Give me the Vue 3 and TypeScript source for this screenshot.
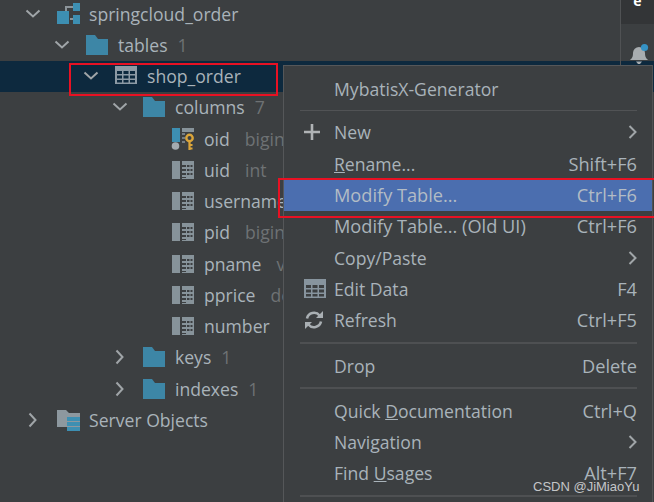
<script setup lang="ts">
interface TreeRow {
  depth: number
  arrow: 'down' | 'right' | ''
  icon: 'schema' | 'folder' | 'table' | 'key' | 'column' | 'server'
  name: string
  extra?: string
  kind?: 'count' | 'type'
  selected?: boolean
}
interface MenuRow {
  sep?: 'thin' | 'thick'
  before?: string
  mnemonic?: string
  after?: string
  shortcut?: string
  sub?: boolean
  icon?: 'plus' | 'grid' | 'refresh'
  active?: boolean
  wide?: boolean
}
const rows: TreeRow[] = [
  { depth: 0, arrow: 'down', icon: 'schema', name: 'springcloud_order' },
  { depth: 1, arrow: 'down', icon: 'folder', name: 'tables', extra: '1', kind: 'count' },
  { depth: 2, arrow: 'down', icon: 'table', name: 'shop_order', selected: true },
  { depth: 3, arrow: 'down', icon: 'folder', name: 'columns', extra: '7', kind: 'count' },
  { depth: 4, arrow: '', icon: 'key', name: 'oid', extra: 'bigint', kind: 'type' },
  { depth: 4, arrow: '', icon: 'column', name: 'uid', extra: 'int', kind: 'type' },
  { depth: 4, arrow: '', icon: 'column', name: 'username', extra: 'varchar', kind: 'type' },
  { depth: 4, arrow: '', icon: 'column', name: 'pid', extra: 'bigint', kind: 'type' },
  { depth: 4, arrow: '', icon: 'column', name: 'pname', extra: 'varchar', kind: 'type' },
  { depth: 4, arrow: '', icon: 'column', name: 'pprice', extra: 'decimal', kind: 'type' },
  { depth: 4, arrow: '', icon: 'column', name: 'number', extra: 'int', kind: 'type' },
  { depth: 3, arrow: 'right', icon: 'folder', name: 'keys', extra: '1', kind: 'count' },
  { depth: 3, arrow: 'right', icon: 'folder', name: 'indexes', extra: '1', kind: 'count' },
  { depth: 0, arrow: 'right', icon: 'server', name: 'Server Objects' },
]
const menu: MenuRow[] = [
  { before: 'MybatisX-Generator' },
  { sep: 'thin' },
  { before: 'New', sub: true, icon: 'plus' },
  { mnemonic: 'R', after: 'ename...', shortcut: 'Shift+F6' },
  { before: 'Modify Table...', shortcut: 'Ctrl+F6', active: true, wide: true },
  { before: 'Modify Table... (Old UI)', shortcut: 'Ctrl+F6', wide: true },
  { before: 'Copy/Paste', sub: true },
  { before: 'Edit Data', shortcut: 'F4', icon: 'grid' },
  { before: 'Refresh', shortcut: 'Ctrl+F5', icon: 'refresh' },
  { sep: 'thick' },
  { before: 'Drop', shortcut: 'Delete' },
  { sep: 'thick' },
  { before: 'Quick ', mnemonic: 'D', after: 'ocumentation', shortcut: 'Ctrl+Q' },
  { before: 'Navigation', sub: true },
  { before: 'Find ', mnemonic: 'U', after: 'sages', shortcut: 'Alt+F7' },
  { sep: 'thick' },
]
</script>

<template>
  <div class="page">
    <div class="tree">
      <div v-for="r in rows" :key="r.name" class="row" :class="[`depth-${r.depth}`, { selected: r.selected }]">
        <span class="arrow">
          <svg v-if="r.arrow === 'down'" width="16" height="16" viewBox="0 0 16 16"><path d="M1.5 4.5 8 10.5 14.5 4.5" class="chev" /></svg>
          <svg v-else-if="r.arrow === 'right'" width="16" height="16" viewBox="0 0 16 16"><path d="M4.5 1.5 10.5 8 4.5 14.5" class="chev" /></svg>
        </span>
        <span class="icon">
          <svg v-if="r.icon === 'schema'" width="24" height="24" viewBox="0 0 24 24">
            <path d="M10 14V5h8M14 17h6" fill="none" stroke="#8c9499" stroke-width="2" />
            <rect x="17" y="1" width="8" height="8" fill="#3d8fb2" />
            <rect x="1" y="9" width="12" height="13" fill="#3d8fb2" />
            <rect x="17" y="13" width="8" height="9" fill="#3d8fb2" />
          </svg>
          <svg v-else-if="r.icon === 'folder'" width="24" height="24" viewBox="0 0 24 24">
            <path d="M1 2h9l3 4h10v16H1z" fill="#3d86a6" />
          </svg>
          <svg v-else-if="r.icon === 'table'" width="24" height="24" viewBox="0 0 24 24">
            <rect x="1" y="2" width="22" height="18" fill="#8c9aa5" />
            <g fill="#0d293e">
              <rect x="3" y="7" width="5" height="3" /><rect x="9.5" y="7" width="5" height="3" /><rect x="16" y="7" width="5" height="3" />
              <rect x="3" y="11.5" width="5" height="3" /><rect x="9.5" y="11.5" width="5" height="3" /><rect x="16" y="11.5" width="5" height="3" />
              <rect x="3" y="16" width="5" height="2.5" /><rect x="9.5" y="16" width="5" height="2.5" /><rect x="16" y="16" width="5" height="2.5" />
            </g>
          </svg>
          <svg v-else-if="r.icon === 'column'" width="24" height="24" viewBox="0 0 24 24">
            <rect x="1" y="3" width="8" height="18" fill="#87939a" />
            <path d="M11 3h12v18H11z" fill="#87939a" />
            <g fill="#3c3f41">
              <rect x="11" y="7" width="4" height="2" /><rect x="16" y="7" width="2.5" height="2" /><rect x="19.5" y="7" width="2" height="2" />
              <rect x="11" y="11" width="4" height="2" /><rect x="16" y="11" width="2.5" height="2" /><rect x="19.5" y="11" width="2" height="2" />
              <rect x="11" y="15" width="4" height="2" /><rect x="16" y="15" width="2.5" height="2" /><rect x="19.5" y="15" width="2" height="2" />
              <rect x="11" y="19" width="4" height="1" />
            </g>
          </svg>
          <svg v-else-if="r.icon === 'key'" width="24" height="24" viewBox="0 0 24 24">
            <rect x="1" y="1" width="8" height="14" fill="#3d8fb2" />
            <circle cx="4.5" cy="19" r="3.8" fill="#a3abb0" />
            <path d="M11 1h12v4H11z" fill="#87939a" />
            <path d="M11 7h3M11 11h3M11 15h3" stroke="#87939a" stroke-width="1.5" />
            <circle cx="18.5" cy="11" r="3.2" fill="none" stroke="#dba53a" stroke-width="2.4" />
            <path d="M18.5 14v9M18.5 18h3M18.5 21.5h3" stroke="#dba53a" stroke-width="2.2" fill="none" />
          </svg>
          <svg v-else width="24" height="24" viewBox="0 0 24 24">
            <path d="M1 2h9l3 3h11v14H1z" fill="#8d989f" />
            <rect x="11" y="9" width="13" height="4" fill="#3d8fb2" />
            <rect x="11" y="14" width="13" height="4" fill="#3d8fb2" />
            <rect x="11" y="19" width="13" height="4" fill="#3d8fb2" />
          </svg>
        </span>
        <span class="name">{{ r.name }}</span>
        <span v-if="r.extra" :class="r.kind">{{ r.extra }}</span>
      </div>
    </div>

    <aside class="side">
      <div class="side-top"><span class="side-glyph">e</span></div>
      <svg class="bell" width="22" height="22" viewBox="0 0 22 22">
        <path d="M2 17c2-2 3-3 3-7a6 6 0 0 1 12 0c0 4 1 5 3 7z" fill="#a8adb0" />
        <path d="M8 18.5h6l-2 2.5h-2z" fill="#a8adb0" />
        <circle cx="16.5" cy="4.5" r="3.6" fill="#3592c4" />
      </svg>
    </aside>

    <div class="menu">
      <template v-for="(m, i) in menu" :key="i">
        <div v-if="m.sep" class="sep" :class="m.sep"></div>
        <div v-else class="item" :class="{ active: m.active, wide: m.wide }">
          <span class="m-icon">
            <svg v-if="m.icon === 'plus'" width="16" height="16" viewBox="0 0 16 16"><path d="M0 8h16M8 0v16" stroke="#b0b3b5" stroke-width="2.6" /></svg>
            <svg v-else-if="m.icon === 'grid'" width="22" height="20" viewBox="0 0 22 20">
              <rect width="22" height="19" fill="#87949e" />
              <g fill="#3c3f41">
                <rect x="2" y="6" width="5" height="3" /><rect x="8.5" y="6" width="5" height="3" /><rect x="15" y="6" width="5" height="3" />
                <rect x="2" y="10.5" width="5" height="3" /><rect x="8.5" y="10.5" width="5" height="3" /><rect x="15" y="10.5" width="5" height="3" />
                <rect x="2" y="15" width="5" height="2.5" /><rect x="8.5" y="15" width="5" height="2.5" /><rect x="15" y="15" width="5" height="2.5" />
              </g>
            </svg>
            <svg v-else-if="m.icon === 'refresh'" width="20" height="20" viewBox="0 0 20 20">
              <path d="M3 8.5A7.2 7.2 0 0 1 15.6 5.5" fill="none" stroke="#a9afb3" stroke-width="2.6" />
              <path d="M12 8h7V1z" fill="#a9afb3" />
              <path d="M17 11.5A7.2 7.2 0 0 1 4.4 14.5" fill="none" stroke="#a9afb3" stroke-width="2.6" />
              <path d="M8 12H1v7z" fill="#a9afb3" />
            </svg>
          </span>
          <span class="label">{{ m.before }}<u v-if="m.mnemonic">{{ m.mnemonic }}</u>{{ m.after }}</span>
          <span v-if="m.shortcut" class="shortcut">{{ m.shortcut }}</span>
          <svg v-if="m.sub" class="sub" width="12" height="16" viewBox="0 0 12 16"><path d="M2.5 2 8.5 8l-6 6" class="chev" /></svg>
        </div>
      </template>
    </div>

    <div class="mark mark-row"></div>
    <div class="mark mark-item"></div>
    <div class="watermark">CSDN @JiMiaoYu</div>
  </div>
</template>

<style scoped>
.page {
  position: relative;
  width: 654px;
  height: 502px;
  overflow: hidden;
  background: #3c3f41;
  color: #a9b3ba;
  font-family: "Open Sans", "Liberation Sans", sans-serif;
  font-size: 17.6px;
}
.tree {
  margin-top: -2px;
}
.row {
  display: flex;
  align-items: center;
  height: 31.25px;
  white-space: nowrap;
}
.selected { background: #0d293e; }
.depth-0 { padding-left: 25px; }
.depth-1 { padding-left: 54px; }
.depth-2 { padding-left: 83px; }
.depth-3 { padding-left: 111px; }
.depth-4 { padding-left: 140px; }
.arrow {
  width: 31px;
  height: 16px;
  flex: none;
}
.arrow svg { display: block; }
.depth-3 .arrow svg { margin-left: 1px; }
.chev {
  fill: none;
  stroke: #a0a5a8;
  stroke-width: 2;
}
.icon {
  width: 33px;
  height: 24px;
  flex: none;
}
.icon svg { display: block; }
.count { margin-left: 10px; color: #6e7274; }
.type { margin-left: 15px; color: #6e7274; }

.side {
  position: absolute;
  top: 0;
  right: 0;
  width: 33px;
  height: 65px;
  border-left: 1px solid #505254;
}
.side-top {
  height: 24px;
  background: #333537;
  text-align: center;
  overflow: hidden;
}
.side-glyph {
  display: block;
  margin-top: -9px;
  color: #fff;
  font-size: 14px;
  font-weight: 700;
  line-height: 20px;
}
.bell {
  position: absolute;
  left: 7px;
  top: 43px;
}

.menu {
  position: absolute;
  left: 283px;
  top: 65px;
  width: 370px;
  height: 460px;
  box-sizing: border-box;
  padding-top: 7px;
  background: #3c3f41;
  border: 1px solid #555759;
  border-right-color: #505254;
}
.item {
  display: flex;
  align-items: center;
  height: 31.3px;
  padding-right: 15px;
  white-space: nowrap;
}
.item.wide,
.shortcut { font-size: 18.2px; }
.item.active {
  background: #4b6eaf;
  color: #b3bcc5;
}
.m-icon {
  width: 50px;
  padding-left: 20px;
  box-sizing: border-box;
  flex: none;
  display: flex;
  justify-content: flex-start;
}
.m-icon svg { display: block; }
.label { flex: 1; }
.sub { margin-right: -2px; }
.sep {
  margin-left: 16px;
  margin-right: 15px;
}
.sep.thin {
  height: 1.5px;
  margin-top: 5.5px;
  margin-bottom: 5.5px;
  background: #515355;
}
.sep.thick {
  height: 2px;
  margin-top: 6px;
  margin-bottom: 6px;
  background: #4e5052;
}
.mark {
  position: absolute;
  border: 2px solid #e81123;
  box-sizing: border-box;
  pointer-events: none;
}
.mark-row {
  left: 69px;
  top: 63px;
  width: 209px;
  height: 33px;
}
.mark-item {
  left: 278px;
  top: 178px;
  width: 390px;
  height: 40px;
}
.watermark {
  position: absolute;
  left: 533px;
  top: 479px;
  font-family: "Liberation Sans", Arial, sans-serif;
  font-size: 13px;
  line-height: 16px;
  color: #c4c6c8;
}
</style>
